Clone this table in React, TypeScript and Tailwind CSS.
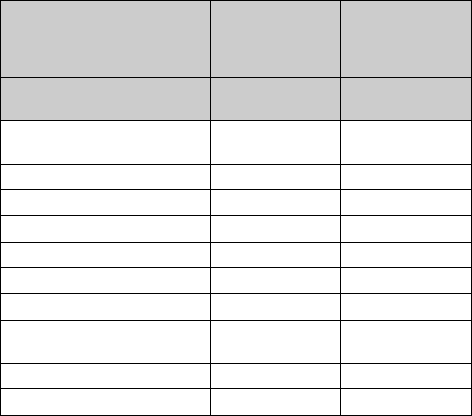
import React from "react";

const rows: { h: string; head?: boolean }[] = [
  { h: "h-[77px]", head: true },
  { h: "h-[43px]", head: true },
  { h: "h-[44px]" },
  { h: "h-[25px]" },
  { h: "h-[26px]" },
  { h: "h-[27px]" },
  { h: "h-[25px]" },
  { h: "h-[26px]" },
  { h: "h-[27px]" },
  { h: "h-[43px]" },
  { h: "h-[25px]" },
  { h: "h-[27px]" },
];

export default function App() {
  return (
    <div className="w-[472px] h-[416px] bg-white" style={{ fontFamily: '"Liberation Sans", Arial, sans-serif' }}>
      <div className="w-[472px] border-l border-t border-black">
        {rows.map((r, i) => (
          <div key={i} className={`flex ${r.h} ${r.head ? "bg-[#cccccc]" : "bg-white"}`}>
            <div className="w-[210px] shrink-0 border-r border-b border-black"></div>
            <div className="w-[130px] shrink-0 border-r border-b border-black"></div>
            <div className="w-[131px] shrink-0 border-r border-b border-black"></div>
          </div>
        ))}
      </div>
    </div>
  );
}
